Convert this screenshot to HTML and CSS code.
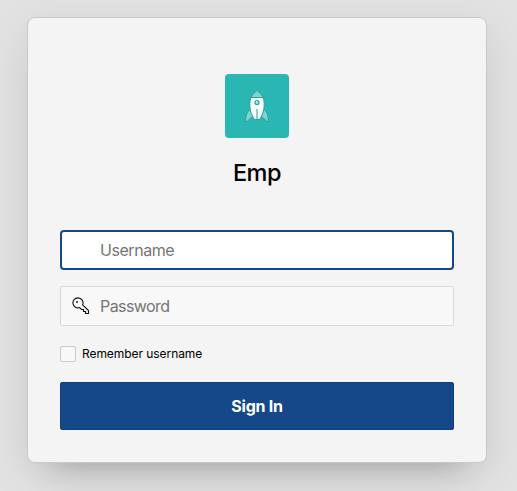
FILE: index.html
```html
<!DOCTYPE html>
<html lang="en">
<head>
<meta charset="utf-8">
<title>Emp</title>
<link rel="stylesheet" href="styles.css">
</head>
<body>
<form class="card">
  <svg class="logo" viewBox="0 0 64 64" aria-hidden="true">
    <rect width="64" height="64" rx="4" fill="#2ab7b3"/>
    <g stroke="#2c9f9b" stroke-width="1" stroke-linejoin="round">
      <path d="M25.500 35Q20.500 38 20.500 47.500H22L28 42Z" fill="#7fd3d0"/>
      <path d="M38.500 35Q43.500 38 43.500 47.500H42L36 42Z" fill="#7fd3d0"/>
      <path d="M25.700 23.500C23.500 32 25.500 40 29.500 45.500H34.500C38.500 40 40.500 32 38.300 23.500Z" fill="#f4fdfc"/>
      <path d="M25.700 23.500Q28 19 32 16.500Q36 19 38.300 23.500Z" fill="#7fd3d0"/>
      <circle cx="32" cy="28.500" r="2" fill="#b5e5e3" stroke-width="1.200"/>
      <path d="M32 35V46"/>
    </g>
  </svg>
  <h1 class="title">Emp</h1>
  <label class="field field-active"><input class="input" type="text" placeholder="Username"></label>
  <label class="field">
    <svg class="key" viewBox="0 0 18 18" aria-hidden="true">
      <path d="M6 .9a5 5 0 1 0 1.600 9.700L9.500 12.500H11.500V14.500H13.500V16.500H16.500V13.500L10.600 7.900A5 5 0 0 0 6 .9Z" fill="none" stroke="#111" stroke-width="1.100"/>
      <circle cx="5" cy="5" r="1" fill="#222"/>
    </svg>
    <input class="input input-password" type="password" placeholder="Password">
  </label>
  <label class="remember"><input class="check" type="checkbox"><span>Remember username</span></label>
  <button class="submit" type="button">Sign In</button>
</form>
</body>
</html>
```
FILE: styles.css
```css
* { box-sizing: border-box; }
body {
  margin: 0;
  height: 491px;
  overflow: hidden;
  padding: 17px 30px 0 27px;
  background: #e2e2e2;
  font-family: Inter, "Liberation Sans", sans-serif;
}
.card {
  display: flex;
  flex-direction: column;
  height: 446px;
  padding: 56px 32px 32px;
  border: 1px solid #c9c9c9;
  border-radius: 8px;
  background: #f4f4f4;
  box-shadow: 0 24px 32px -24px rgba(0, 0, 0, .27), 0 12px 48px rgba(0, 0, 0, .09);
}
.logo { width: 64px; height: 64px; align-self: center; }
.title {
  margin: 20px 0 42px;
  font-size: 23.5px;
  line-height: 30px;
  font-weight: 500;
  letter-spacing: -.5px;
  text-align: center;
  color: #000;
}
.field {
  display: flex;
  align-items: center;
  height: 40px;
  margin-bottom: 16px;
  padding-left: 39px;
  border: 1px solid #d9d9d9;
  border-radius: 2px;
  background: #f8f8f8;
}
.field-active {
  padding-left: 38px;
  border: 2px solid #144889;
  border-radius: 4px;
  background: #fff;
}
.key { width: 18px; height: 18px; margin-left: -28px; margin-right: 10px; flex: none; }
.input {
  flex: 1;
  min-width: 0;
  padding: 0;
  border: 0;
  outline: 0;
  background: transparent;
  font: 400 16px/24px Inter, "Liberation Sans", sans-serif;
  letter-spacing: -.45px;
}
.input-password { letter-spacing: -.58px; }
.input::placeholder { color: #757575; opacity: 1; }
.remember {
  display: flex;
  align-items: center;
  gap: 6px;
  height: 16px;
  margin: 4px 0 20px;
  font-size: 12px;
  line-height: 16px;
  letter-spacing: -.06px;
  color: #000;
}
.check {
  appearance: none;
  width: 16px;
  height: 16px;
  margin: 0;
  border: 1px solid #c9c9c9;
  border-radius: 2px;
  background: #f8f8f8;
}
.submit {
  height: 48px;
  padding: 0;
  border: 1px solid #0f407e;
  border-radius: 2px;
  background: #144889;
  color: #fff;
  font: 700 16px/24px Inter, "Liberation Sans", sans-serif;
  letter-spacing: -.25px;
}
```
